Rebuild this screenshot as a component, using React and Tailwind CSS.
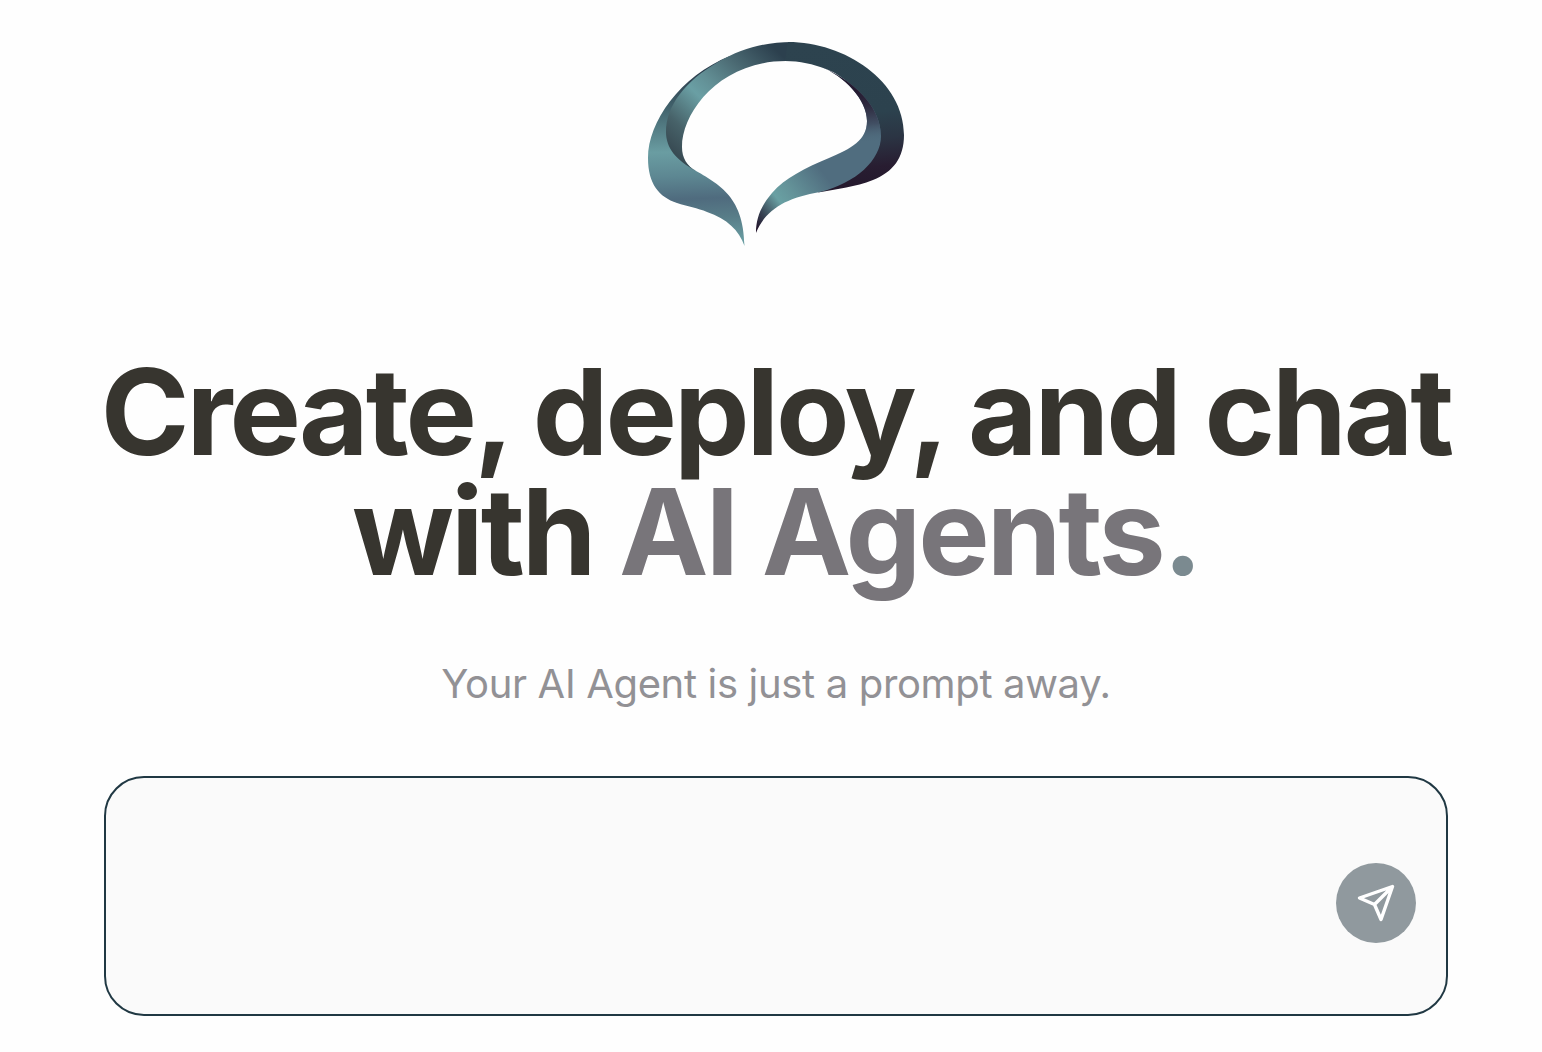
function Logo() {
  return (
    <svg className="block h-[220px] w-[280px]" viewBox="640 30 280 220" fill="none" aria-hidden="true">
      <defs>
        <linearGradient id="leftOuter" gradientUnits="userSpaceOnUse" x1="697" y1="70" x2="703" y2="246">
          <stop offset="0" stopColor="#2b3c4c" />
          <stop offset=".2" stopColor="#40606a" />
          <stop offset=".46" stopColor="#6a9da2" />
          <stop offset=".6" stopColor="#5d8792" />
          <stop offset=".73" stopColor="#4f6b7e" />
          <stop offset=".84" stopColor="#587d88" />
          <stop offset="1" stopColor="#6ba1a5" />
        </linearGradient>
        <linearGradient id="leftInner" gradientUnits="userSpaceOnUse" x1="672" y1="160" x2="776" y2="50">
          <stop offset="0" stopColor="#34444d" />
          <stop offset=".2" stopColor="#476269" />
          <stop offset=".43" stopColor="#6a9fa4" />
          <stop offset=".55" stopColor="#628f95" />
          <stop offset=".75" stopColor="#4b6a73" />
          <stop offset="1" stopColor="#2c404e" />
        </linearGradient>
        <linearGradient id="rightOuter" gradientUnits="userSpaceOnUse" x1="820" y1="42" x2="836" y2="192">
          <stop offset="0" stopColor="#2d434f" />
          <stop offset=".5" stopColor="#2c424e" />
          <stop offset=".68" stopColor="#2b3443" />
          <stop offset=".86" stopColor="#281d31" />
          <stop offset="1" stopColor="#24182c" />
        </linearGradient>
        <linearGradient id="rightInner" gradientUnits="userSpaceOnUse" x1="754" y1="226" x2="850" y2="152">
          <stop offset="0" stopColor="#21122a" />
          <stop offset=".12" stopColor="#384454" />
          <stop offset=".29" stopColor="#69a0a3" />
          <stop offset=".42" stopColor="#649399" />
          <stop offset=".72" stopColor="#506d7f" />
          <stop offset="1" stopColor="#506d7f" />
        </linearGradient>
        <linearGradient id="rightShade" gradientUnits="userSpaceOnUse" x1="862" y1="90" x2="867" y2="143">
          <stop offset="0" stopColor="#251a30" />
          <stop offset=".3" stopColor="#2d293e" />
          <stop offset=".65" stopColor="#414f63" />
          <stop offset="1" stopColor="#506d7f" stopOpacity="0" />
        </linearGradient>
      </defs>
      <path
        fill="url(#leftOuter)"
        d="M730 56C680 76 648 122 648 158C648 184 659 197 677 203C687 206.500 698 208 707 212C727 219 739 230 744.5 246C744 194 716 183 692 168.500L676 154L672 130L690 90Z"
      />
      <path
        fill="url(#leftInner)"
        d="M792 42C766 42 742 48 718 62C685 81 666 106 666 132C666 148 676 160 696 171C687 166 682 158 682 147C682 112 720 61 786 61L792 61Z"
      />
      <path
        fill="url(#rightOuter)"
        d="M788 42C845 42 904 81 904 135C904 158 893 172 873 180C855 187 838 189 818 192.500L850 170L874 138L870 112C862 94 845 76 826 69C813 64 800 61 785 61Z"
      />
      <path
        fill="url(#rightInner)"
        d="M819 66C852 79 881 106 881 136C881 160 856 183 820 192C786 198 766 209 756 233C756 218 761 206 772 193C785 178 805 168 829 158C851 149 867 140 867 121C867 100 845 76 819 66Z"
      />
      <path
        fill="url(#rightShade)"
        d="M819 66C852 79 881 106 881 136L880 146H855C862 140 867 132 867 121C867 100 845 76 819 66Z"
      />
    </svg>
  );
}

function SendIcon() {
  return (
    <svg className="size-10" viewBox="0 0 40 40" fill="none" stroke="white" strokeWidth="3.400" strokeLinecap="round" strokeLinejoin="round" aria-hidden="true">
      <path d="M36.500 3.500L3.500 15L18.500 21.500L25 36.500L36.500 3.500ZM18.500 21.500L36.500 3.500" />
    </svg>
  );
}

export default function App() {
  return (
    <main className="flex h-[1052px] w-full flex-col items-start overflow-hidden bg-[#fefefe] font-['Inter',sans-serif]">
      <div className="flex w-[1552px] shrink-0 flex-col items-center px-[104px] pt-[30px]">
        <div className="pl-2">
          <Logo />
        </div>
        <h1 className="mt-[102px] text-center text-[120px] leading-[120px] font-bold tracking-[-3px] whitespace-nowrap text-[#37352f]">
          Create, deploy, and chat
          <br />
          with <span className="text-[#78757a]">AI Agents</span>
          <span className="text-[#7b8a90]">.</span>
        </h1>
        <p className="mt-[64px] text-[40px] leading-[56px] tracking-[-0.34px] whitespace-nowrap text-[#929195]">
          Your AI Agent is just a prompt away.
        </p>
        <div className="mt-[64px] flex h-60 w-full items-center rounded-[40px] border-2 border-[#203843] bg-[#fafafa] pt-[14px] pr-[30px]">
          <textarea aria-label="Prompt" className="h-full flex-1 resize-none bg-transparent px-8 text-[32px] outline-none" />
          <button type="button" aria-label="Send" className="flex size-20 items-center justify-center rounded-full bg-[#90999e]">
            <SendIcon />
          </button>
        </div>
      </div>
    </main>
  );
}
